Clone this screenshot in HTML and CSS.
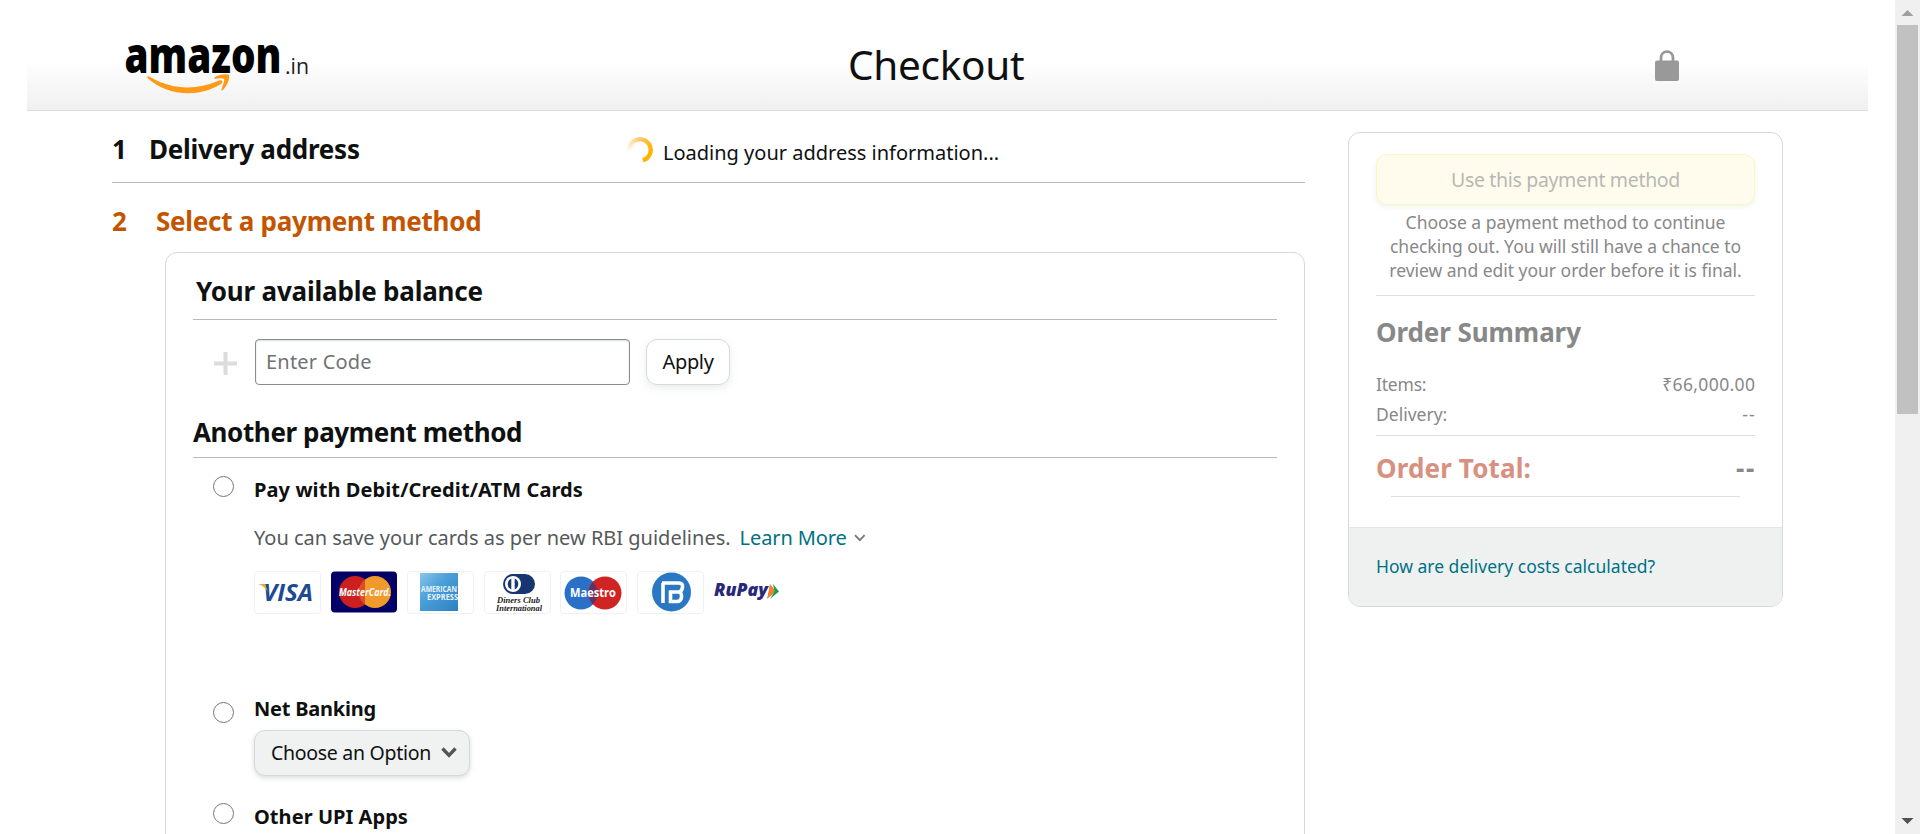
FILE: index.html
```html
<!DOCTYPE html>
<html lang="en">
<head>
<meta charset="utf-8">
<title>Checkout</title>
<link rel="stylesheet" href="styles.css">
</head>
<body>
<div class="page">
  <header class="header">
    <svg class="logo" width="190" height="90" viewBox="0 -30 190 90">
      <text x="-0.5" y="31.500" class="logo-name" textLength="157" lengthAdjust="spacingAndGlyphs">amazon</text>
      <text x="160" y="33" class="logo-tld" textLength="24" lengthAdjust="spacingAndGlyphs">.in</text>
      <path d="M22 35.500 C23 34.500 25 36 27 37 C48 49 72 49 93 40 C97 38 99 41 96 43 C73 57 43 55 23 37.500 Z" fill="#ff9a17"/>
      <path d="M89 37 C93 33 102 32.500 104 34 C105 38 102 45 98 49 C96 50 96 49 97 47 C98 44 100 39 99 38 C97 36.500 93 37.500 90 38 Z" fill="#ff9a17"/>
    </svg>
    <h1 class="title">Checkout</h1>
    <svg class="lock" width="24" height="31" viewBox="0 0 24 31">
      <path d="M6 12 V8 C6 -0.5 18 -0.5 18 8 V12" fill="none" stroke="#999" stroke-width="2.8"/>
      <rect x="0" y="10.5" width="24" height="20.5" rx="2" fill="#999"/>
    </svg>
  </header>
  <div class="columns">
    <main class="steps">
      <section class="step">
        <span class="heading num">1</span>
        <h2 class="heading">Delivery address</h2>
        <div class="loading">
          <span class="spinner"></span>
          <span>Loading your address information...</span>
        </div>
      </section>
      <section class="step-active">
        <span class="heading num">2</span>
        <h2 class="heading">Select a payment method</h2>
      </section>
      <section class="box">
        <h3 class="heading box-head first">Your available balance</h3>
        <div class="code-row">
          <svg class="plus" width="23" height="23" viewBox="0 0 23 23"><path d="M0 11.500H23M11.500 0V23" stroke="#dcdcdc" stroke-width="4"/></svg>
          <div class="input">Enter Code</div>
          <div class="apply">Apply</div>
        </div>
        <h3 class="heading box-head second">Another payment method</h3>
        <div class="option cards-option">
          <span class="radio"></span>
          <div class="option-body">
            <div class="option-name pay-name">Pay with Debit/Credit/ATM Cards</div>
            <div class="note"><span>You can save your cards as per new RBI guidelines.</span><a class="learn">Learn More</a>
              <svg width="12" height="8" viewBox="0 0 12 8"><path d="M1 1.2L5.8 6.2L10.6 1.2" fill="none" stroke="#777" stroke-width="1.8"/></svg>
            </div>
            <div class="cards">
              <svg class="card" viewBox="0 0 67 43"><rect class="card-edge" x=".5" y=".5" width="66" height="42" rx="3"/><text x="9" y="30" class="visa" textLength="50" lengthAdjust="spacingAndGlyphs">VISA</text><path d="M4 13H11L14 21C12 17 8 14 4 13Z" fill="#e9a92c"/></svg>
              <svg class="card" viewBox="0 0 67 43"><rect x="0" y="0.500" width="66" height="41" rx="4" fill="#020066"/><circle cx="24" cy="21" r="16" fill="#cc1f20"/><circle cx="44" cy="21" r="16" fill="#f19a2c"/><path d="M34 8.500A16 16 0 0 0 34 33.500Z" fill="#cc1f20" opacity=".6"/><text x="8" y="25" class="mc" textLength="52" lengthAdjust="spacingAndGlyphs">MasterCard.</text></svg>
              <svg class="card" viewBox="0 0 67 43"><defs><linearGradient id="ax" x1="0" y1="0" x2="1" y2="1"><stop offset="0" stop-color="#8cc4ea"/><stop offset=".4" stop-color="#4ba0da"/><stop offset="1" stop-color="#2c80c0"/></linearGradient></defs><rect class="card-edge" x=".5" y=".5" width="66" height="42" rx="3"/><rect x="13" y="2" width="38" height="38" fill="url(#ax)"/><text x="14" y="21" class="amex" textLength="36" lengthAdjust="spacingAndGlyphs">AMERICAN</text><text x="20" y="29" class="amex" textLength="31" lengthAdjust="spacingAndGlyphs">EXPRESS</text></svg>
              <svg class="card" viewBox="0 0 67 43"><rect class="card-edge" x=".5" y=".5" width="66" height="42" rx="3"/><rect x="19" y="3" width="32" height="20" rx="10" fill="#17366f"/><circle cx="29" cy="13" r="8" fill="#fff"/><path d="M27.300 7.500A6 6 0 0 0 27.300 18.500ZM30.700 7.500A6 6 0 0 1 30.700 18.500Z" fill="#17366f"/><text x="13" y="32" class="diners" textLength="43" lengthAdjust="spacingAndGlyphs">Diners Club</text><text x="12" y="40" class="diners" textLength="46" lengthAdjust="spacingAndGlyphs">International</text></svg>
              <svg class="card" viewBox="0 0 67 43"><rect class="card-edge" x=".5" y=".5" width="66" height="42" rx="3"/><circle cx="21" cy="22" r="16.500" fill="#2a70c8"/><circle cx="45" cy="22" r="16.500" fill="#d02424"/><path d="M33 10.700A16.500 16.500 0 0 1 33 33.300A16.500 16.500 0 0 1 33 10.700Z" fill="#66305f"/><text x="10" y="26" class="maestro" textLength="46" lengthAdjust="spacingAndGlyphs">Maestro</text></svg>
              <svg class="card" viewBox="0 0 67 43"><rect class="card-edge" x=".5" y=".5" width="66" height="42" rx="3"/><circle cx="34.500" cy="21" r="19.500" fill="#2a78c4"/><path d="M25 12H42Q46 12 45.500 16Q45 21 41 21Q45 21 44.500 26Q44 30.500 40 30.500H33.500V21H41M26 12V32M26 21" fill="none" stroke="#fff" stroke-width="3.600"/></svg>
              <svg class="card" viewBox="0 0 67 43"><text x="1" y="25" class="rupay" textLength="54" lengthAdjust="spacingAndGlyphs">RuPay</text><path d="M57 13L63 20.500L54 28Z" fill="#f08032"/><path d="M60 13L66 20.500L57 28L61.500 20.500Z" fill="#179e4e"/></svg>
            </div>
          </div>
        </div>
        <div class="option bank-option">
          <span class="radio"></span>
          <div class="option-body">
            <div class="option-name bank-name">Net Banking</div>
            <div class="select"><span>Choose an Option</span><svg width="16" height="11" viewBox="0 0 16 11"><path d="M1.500 1.500L8 8.300L14.500 1.500" fill="none" stroke="#555" stroke-width="3.400"/></svg></div>
          </div>
        </div>
        <div class="option upi-option">
          <span class="radio"></span>
          <div class="option-body"><div class="option-name">Other UPI Apps</div></div>
        </div>
      </section>
    </main>
    <aside class="summary">
      <div class="summary-main">
        <div class="use">Use this payment method</div>
        <p class="hint">Choose a payment method to continue<br>checking out. You will still have a chance to<br>review and edit your order before it is final.</p>
        <h3 class="heading sum-head">Order Summary</h3>
        <div class="line"><span class="items">Items:</span><span class="price">₹66,000.00</span></div>
        <div class="line line-last"><span>Delivery:</span><span class="dash">--</span></div>
        <div class="heading total"><span class="total-label">Order Total:</span><span class="total-value">--</span></div>
        <div class="rule"></div>
      </div>
      <div class="summary-foot"><a>How are delivery costs calculated?</a></div>
    </aside>
  </div>
</div>
<div class="scrollbar">
  <svg width="25" height="25" viewBox="0 0 25 25"><path d="M6.500 16L12.500 10L18.500 16Z" fill="#a0a0a0"/></svg>
  <div class="thumb"></div>
  <svg class="down" width="25" height="25" viewBox="0 0 25 25"><path d="M6.500 9L12.500 15L18.500 9Z" fill="#505050"/></svg>
</div>
</body>
</html>
```
FILE: styles.css
```css
* { box-sizing: border-box; }
body { margin: 0; display: flex; width: 1920px; height: 834px; overflow: hidden; background: #fff; color: #0f1111; font: 20px/26px "Noto Sans", "Open Sans", sans-serif; white-space: nowrap; }
h1, h2, h3, p { margin: 0; font-weight: 400; }

.page { width: 1895px; height: 834px; overflow: hidden; }
.header { display: flex; align-items: flex-start; height: 111px; margin: 0 27px; border-bottom: 1px solid #ddd; background: linear-gradient(#fff 60px, #f0f0f0 110px); padding-left: 98px; }
.logo { margin-top: 11px; }
.logo-name { font: 800 49px "Open Sans", sans-serif; fill: #000; }
.logo-tld { font: 400 21px "Open Sans", sans-serif; fill: #222; }
.title { font-size: 40.5px; letter-spacing: -.3px; line-height: 56px; margin: 37px 0 0 533px; width: 177px; }
.lock { margin: 50px 0 0 630px; }

.columns { display: flex; align-items: flex-start; padding-left: 112px; }
.steps { width: 1193px; }
.heading { font-size: 26px; line-height: 30px; font-weight: 700; letter-spacing: -.26px; }
.step { display: flex; align-items: flex-start; height: 72px; padding-top: 23px; border-bottom: 1px solid #bbb; }
.step .num { width: 37px; }
.step h2 { width: 478px; }
.loading { display: flex; gap: 10px; margin-top: 4px; line-height: 30px; }
.spinner { width: 26px; height: 26px; margin-top: -1px; border-radius: 50%; background: conic-gradient(from 260deg, rgba(255,180,0,0), rgba(255,170,30,.65) 100deg, #ffb400 180deg 262deg, transparent 268deg); -webkit-mask: radial-gradient(circle, transparent 8px, #000 9px); mask: radial-gradient(circle, transparent 8px, #000 9px); }
.step-active { display: flex; padding-top: 23px; color: #c45500; }
.step-active .num { width: 44px; }

.box { margin: 16px 0 0 53px; width: 1140px; height: 700px; border: 1px solid #d5d9d9; border-radius: 12px; padding: 0 27px; }
.box-head { border-bottom: 1px solid #bbb; }
.first { padding: 23px 0 13px 3px; letter-spacing: -.2px; }
.second { padding: 32px 0 10px; letter-spacing: -.39px; }
.code-row { display: flex; padding: 19px 0 0 21px; height: 65px; }
.plus { margin: 13px 18px 0 0; }
.input { width: 375px; height: 46px; border: 1px solid #888c8c; border-radius: 4px; box-shadow: inset 0 1px 2px rgba(15,17,17,.15); padding-left: 10px; line-height: 44px; letter-spacing: .2px; color: #6f7373; }
.apply { width: 84px; height: 46px; margin-left: 16px; border: 1px solid #d5d9d9; border-radius: 11px; box-shadow: 0 3px 7px rgba(213,217,217,.5); line-height: 43px; letter-spacing: -.35px; text-align: center; }

.option { display: flex; padding-left: 20px; }
.radio { width: 21px; height: 21px; border: 1.5px solid #767676; border-radius: 50%; margin-right: 20px; flex: none; }
.cards-option { margin-top: 18px; }
.option-name { font-weight: 700; padding-top: 1px; letter-spacing: .05px; }
.pay-name { letter-spacing: .09px; }
.bank-name { letter-spacing: -.22px; }
.note { margin-top: 22px; color: #565959; display: flex; align-items: center; }
.learn { color: #007185; margin: 0 7px 0 9px; letter-spacing: -.1px; }
.cards { display: flex; gap: 9.5px; margin-top: 20px; }
.card { width: 67px; height: 43px; }
.card-edge { fill: #fff; stroke: #f0f0f0; }
.visa { font: italic 700 24px "Open Sans", sans-serif; fill: #1d4b93; }
.mc { font: italic 700 11px "Open Sans", sans-serif; fill: #fff; }
.amex { font: 700 8px "Open Sans", sans-serif; fill: #e8f4fc; }
.diners { font: italic 700 8.5px "Liberation Serif", serif; fill: #222; }
.maestro { font: 700 12px "Open Sans", sans-serif; fill: #fff; }
.rupay { font: italic 800 17px "Open Sans", sans-serif; fill: #29297c; }

.bank-option { margin-top: 81px; }
.bank-option .radio { margin-top: 7px; }
.select { display: flex; align-items: center; justify-content: space-between; width: 216px; height: 46px; margin-top: 8px; padding: 0 12px 1px 16px; border: 1px solid #d5d9d9; border-radius: 11px; background: #f0f2f2; box-shadow: 0 2px 5px rgba(15,17,17,.15); font-size: 19.5px; letter-spacing: -.29px; }
.upi-option { margin-top: 27px; }

.summary { width: 435px; margin: 21px 0 0 43px; border: 1px solid #d5d9d9; border-radius: 12px; overflow: hidden; }
.summary-main { padding: 21px 27px 30px; color: #878888; font-size: 17.5px; line-height: 24px; }
.use { height: 51px; border: 1px solid #fff3c4; border-radius: 11px; background: #fffcee; box-shadow: 0 2px 5px rgba(213,217,217,.35); font-size: 19.5px; letter-spacing: -.33px; line-height: 50px; text-align: center; color: #b7b8b4; }
.hint { margin-top: 5px; padding-bottom: 13px; border-bottom: 1px solid #ddd; text-align: center; letter-spacing: -.02px; }
.sum-head { margin: 21px 0 25px; letter-spacing: -.08px; }
.line { display: flex; justify-content: space-between; margin-bottom: 6px; }
.line-last { margin: 0; padding-bottom: 9px; border-bottom: 1px solid #ddd; }
.items { letter-spacing: -.2px; }
.price { letter-spacing: .38px; margin-right: -.4px; }
.dash { letter-spacing: 1.3px; margin-right: -1px; }
.total { display: flex; justify-content: space-between; margin-top: 17px; }
.total-label { color: #d89080; letter-spacing: .14px; }
.total-value { letter-spacing: 1.7px; margin-right: -1px; }
.rule { margin: 13px 15px 0; height: 1px; background: #ddd; }
.summary-foot { height: 79px; border-top: 1px solid #e4e6e6; background: #eff1f1; padding-left: 27px; font-size: 17.5px; line-height: 77px; color: #007185; }

.scrollbar { width: 25px; height: 834px; background: #f0f0f0; display: flex; flex-direction: column; }
.thumb { width: 21px; height: 389px; margin-left: 2px; background: #c1c1c1; }
.down { margin-top: auto; }
```
